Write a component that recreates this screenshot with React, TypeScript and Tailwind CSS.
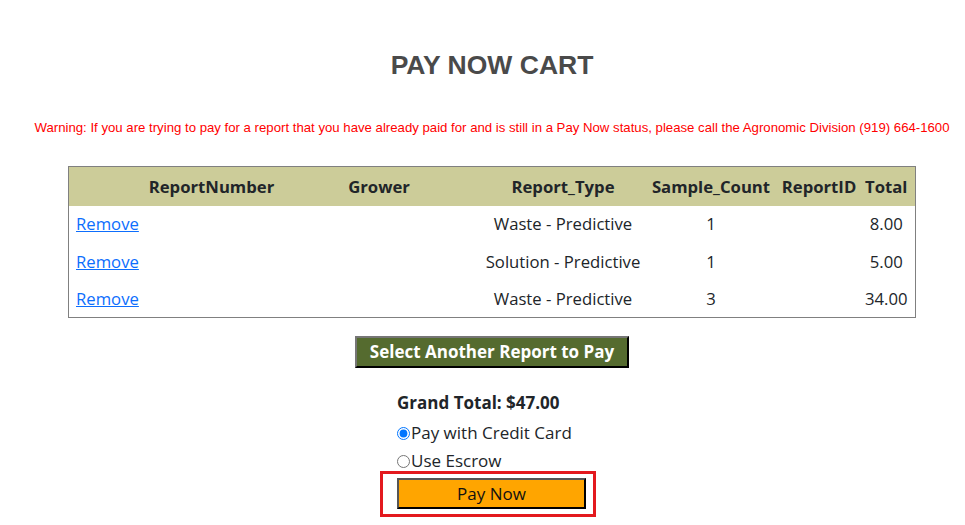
import { useState } from 'react'

interface CartRow {
  reportType: string
  sampleCount: number
  total: string
}

const rows: CartRow[] = [
  { reportType: 'Waste - Predictive', sampleCount: 1, total: '8.00' },
  { reportType: 'Solution - Predictive', sampleCount: 1, total: '5.00' },
  { reportType: 'Waste - Predictive', sampleCount: 3, total: '34.00' },
]

const uiFont = { fontFamily: '"Segoe UI", "Open Sans", "Noto Sans", sans-serif' }
const arial = { fontFamily: '"Liberation Sans", Arial, sans-serif' }

export default function App() {
  const [method, setMethod] = useState<'card' | 'escrow'>('card')

  return (
    <div className="min-h-screen bg-white text-[#212529] overflow-hidden" style={uiFont}>
      <div className="pl-[19px] flex flex-col items-center">
        <h1 className="mt-[50px] h-[30px] leading-[30px] text-[26.5px] font-bold text-[#4a4a4a]" style={arial}>
          PAY NOW CART
        </h1>

        <p className="mt-[41px] h-[14px] leading-[14px] text-[13.2px] text-[#ff0000] whitespace-nowrap" style={arial}>
          Warning: If you are trying to pay for a report that you have already paid for and is still in a Pay Now status, please call the Agronomic Division (919) 664-1600
        </p>

        {/* Cart grid */}
        <table className="mt-[31px] w-[847px] border border-[#808080] border-collapse table-fixed text-[16.7px]">
          <colgroup>
            <col className="w-[77px]" />
            <col className="w-[132px]" />
            <col className="w-[203px]" />
            <col className="w-[165px]" />
            <col className="w-[131px]" />
            <col className="w-[85px]" />
            <col className="w-[54px]" />
          </colgroup>
          <thead>
            <tr className="h-[39px] bg-[#cccc99] font-bold">
              <th />
              <th className="text-center whitespace-nowrap">ReportNumber</th>
              <th className="text-center">Grower</th>
              <th className="text-center whitespace-nowrap">Report_Type</th>
              <th className="text-center whitespace-nowrap">Sample_Count</th>
              <th className="text-center whitespace-nowrap">ReportID</th>
              <th className="text-center pr-[4px]">Total</th>
            </tr>
          </thead>
          <tbody>
            {rows.map((r, i) => (
              <tr key={i} className={i === 1 ? 'h-[38px]' : 'h-[37px]'}>
                <td className="pl-[7px]">
                  <a href="#" className="text-[#0d6efd] underline">Remove</a>
                </td>
                <td />
                <td />
                <td className="text-center whitespace-nowrap">{r.reportType}</td>
                <td className="text-center">{r.sampleCount}</td>
                <td />
                <td className="text-center pr-[4px]">{r.total}</td>
              </tr>
            ))}
          </tbody>
        </table>

        <button className="mt-[18px] h-[32px] w-[274px] bg-[#556b2f] text-white font-bold text-[17px] border-2 border-t-[#767676] border-l-[#767676] border-b-black border-r-black">
          Select Another Report to Pay
        </button>

        {/* Totals and payment method */}
        <div className="self-start ml-[378px] mt-[23px] text-[17px]">
          <div className="h-[24px] leading-[24px] font-bold">Grand Total: $47.00</div>
          <label className="flex items-center h-[28px] mt-[4px]">
            <input
              type="radio"
              name="paymethod"
              checked={method === 'card'}
              onChange={() => setMethod('card')}
              className="m-0 mr-[1px] w-[13px] h-[13px] accent-[#0075ff]"
            />
            Pay with Credit Card
          </label>
          <label className="flex items-center h-[28px]">
            <input
              type="radio"
              name="paymethod"
              checked={method === 'escrow'}
              onChange={() => setMethod('escrow')}
              className="m-0 mr-[1px] w-[13px] h-[13px]"
            />
            Use Escrow
          </label>
          <div className="-ml-[17px] -mt-[4px] w-[216px] border-[3px] border-[#e3191e] pl-[14px] pr-[7px] pt-[4px] pb-[5px]">
            <button className="w-[189px] h-[31px] bg-[#ffa500] border-2 border-t-[#555] border-l-[#555] border-b-black border-r-black text-[17px] text-[#111]">
              Pay Now
            </button>
          </div>
        </div>
      </div>
    </div>
  )
}
